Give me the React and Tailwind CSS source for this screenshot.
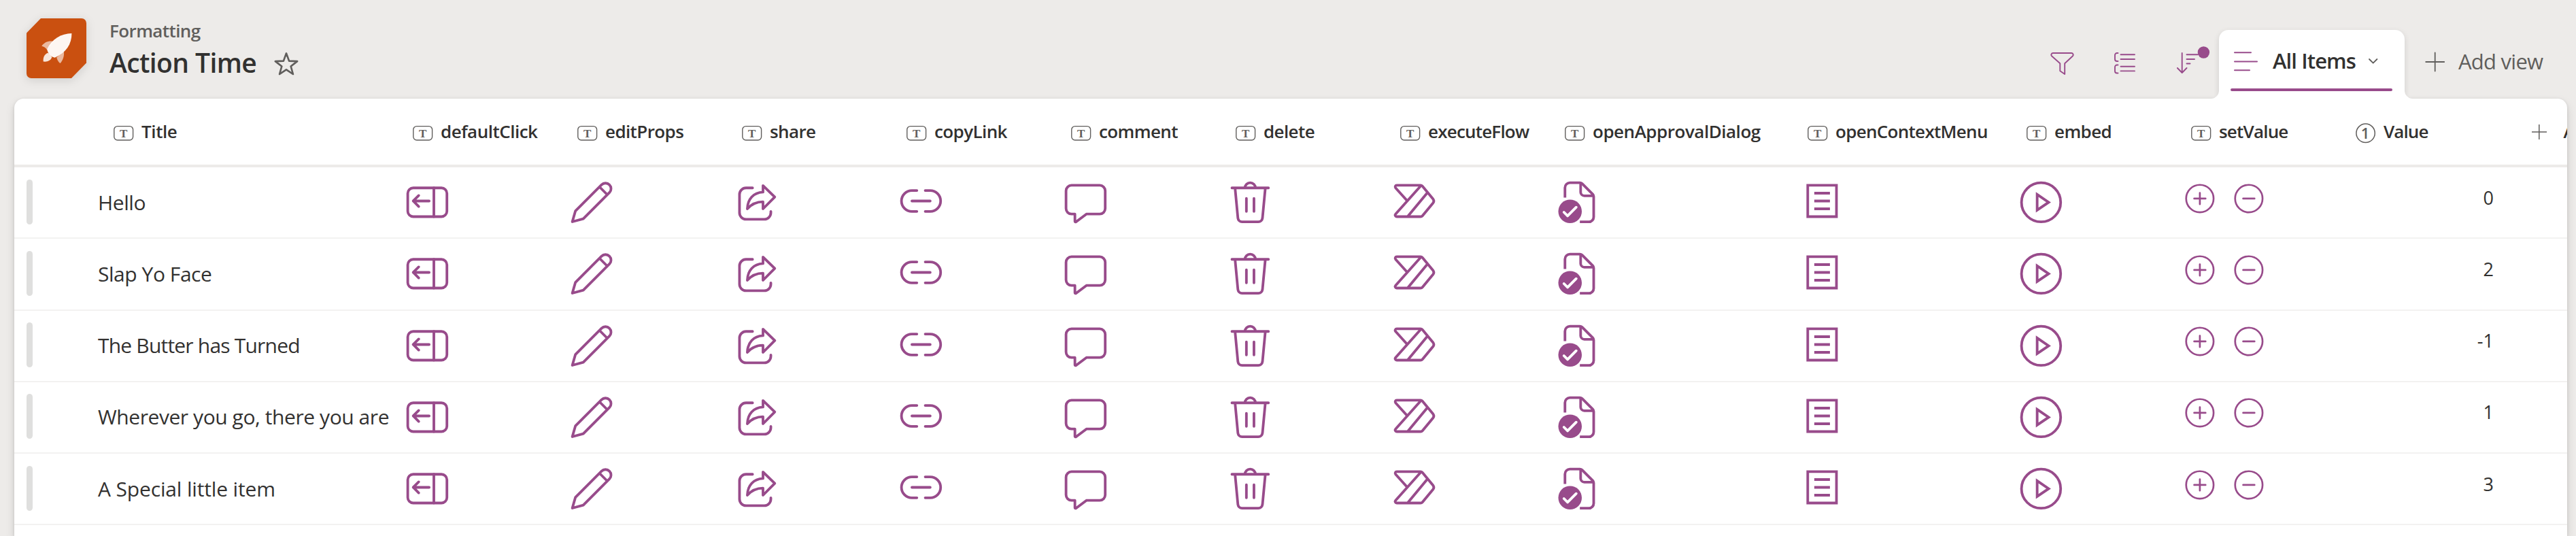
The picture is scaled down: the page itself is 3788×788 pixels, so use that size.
const ICON_PROPS = { fill: "none", stroke: "currentColor", strokeWidth: 1, strokeLinecap: "round", strokeLinejoin: "round" };

function CellIcon({ children, ...rest }) {
  return (
    <svg viewBox="0 0 20 20" className="size-[76.8px] shrink-0" {...ICON_PROPS} {...rest}>
      {children}
    </svg>
  );
}

function PanelIcon() {
  return (
    <CellIcon>
      <rect x="2.5" y="4.5" width="15" height="11" rx="2.1" />
      <path d="M12.5 4.5v11M10.7 9.5H4.6M6.7 7.4L4.6 9.5l2.1 2.1" />
    </CellIcon>
  );
}

function PencilIcon() {
  return (
    <CellIcon>
      <path d="M13.7 3.3a2.12 2.12 0 0 1 3 3L6.7 16.3 2.5 17.45 3.7 13.3zM12.9 4.1l3 3" />
    </CellIcon>
  );
}

function ShareIcon() {
  return (
    <CellIcon>
      <path d="M8.5 4.5H6a2.5 2.5 0 0 0-2.5 2.5v7A2.5 2.5 0 0 0 6 16.5h7a2.5 2.5 0 0 0 2.5-2.5v-.5" />
      <path d="M12.5 3.6L17 8l-4.5 4.5V9.8c-2.4 0-4.4.9-6 2.7.1-3.8 2.4-6.2 6-6.4z" />
    </CellIcon>
  );
}

function LinkIcon() {
  return (
    <CellIcon>
      <path d="M8.4 5.5H6.5a4 4 0 0 0 0 8h1.9M11.6 5.5h1.9a4 4 0 0 1 0 8h-1.9M6.5 9.5h7" />
    </CellIcon>
  );
}

function CommentIcon() {
  return (
    <CellIcon>
      <path d="M4.6 3.5h10.8a2.1 2.1 0 0 1 2.1 2.1v6.8a2.1 2.1 0 0 1-2.1 2.1h-5.1l-4 3a.25.25 0 0 1-.4-.2v-2.8H4.6a2.1 2.1 0 0 1-2.1-2.1V5.6a2.1 2.1 0 0 1 2.1-2.1z" />
    </CellIcon>
  );
}

function TrashIcon() {
  return (
    <CellIcon>
      <path d="M3 4.5h14M8 4.5a2 2 0 0 1 4 0M4.2 4.5l1.1 11.6a1.6 1.6 0 0 0 1.6 1.4h6.2a1.6 1.6 0 0 0 1.6-1.4l1.1-11.6M8.55 8.5v5M11.45 8.5v5" />
    </CellIcon>
  );
}

function FlowIcon() {
  return (
    <CellIcon>
      <path d="M3.1 3.5h9.1q.45 0 .75.35l4.1 4.95q.5.7 0 1.4l-4.1 4.95q-.3.35-.75.35H3.1a.6.6 0 0 1-.45-1L12.3 3.7M7 9.3L2.65 4.5a.6.6 0 0 1 .45-1M14.8 6.4L7.4 15.3" />
    </CellIcon>
  );
}

function ApprovalIcon() {
  return (
    <CellIcon strokeLinecap="butt">
      <path d="M4.5 8.2V4.4a1.9 1.9 0 0 1 1.9-1.9h3.8q.5 0 .85.35l4.1 4.1q.35.35.35.85v7.8a1.9 1.9 0 0 1-1.9 1.9h-3.4" />
      <path d="M10.5 2.6v3.5a1.4 1.4 0 0 0 1.4 1.4h3.5" />
      <circle cx="6.45" cy="13.5" r="4.5" fill="currentColor" stroke="none" />
      <path d="M4.1 13.8l1.4 1.4 3.3-3.3" stroke="#fff" strokeLinecap="round" />
    </CellIcon>
  );
}

function ListIcon() {
  return (
    <CellIcon strokeLinecap="butt" strokeLinejoin="miter">
      <path d="M4.5 3.5h11v12h-11zM7 6.5h6M7 9.5h6M7 12.5h6" />
    </CellIcon>
  );
}

function PlayIcon() {
  return (
    <CellIcon strokeLinejoin="miter">
      <circle cx="10" cy="10" r="7.5" />
      <path d="M8.5 7l4.4 3-4.4 3z" />
    </CellIcon>
  );
}

function StepIcons() {
  return (
    <div className="flex gap-[19px] pb-[12px] pl-[2.5px]">
      <svg viewBox="0 0 20 20" className="size-[53.8px]" {...ICON_PROPS}>
        <circle cx="10" cy="10" r="7.5" />
        <path d="M10 6.9v6.2M6.9 10h6.2" />
      </svg>
      <svg viewBox="0 0 20 20" className="size-[53.8px]" {...ICON_PROPS}>
        <circle cx="10" cy="10" r="7.5" />
        <path d="M6.9 10h6.2" />
      </svg>
    </div>
  );
}

function TextTypeIcon() {
  return (
    <svg width="30" height="30" viewBox="0 0 30 30" className="relative top-[2px] shrink-0 text-[#605e5c]">
      <rect x="0.8" y="4.6" width="27.8" height="20.4" rx="5" fill="none" stroke="currentColor" strokeWidth="1.4" />
      <text x="14.6" y="20.5" textAnchor="middle" fontFamily="Liberation Serif, serif" fontSize="17" fill="currentColor">T</text>
    </svg>
  );
}

function NumberTypeIcon() {
  return (
    <svg width="30" height="30" viewBox="0 0 30 30" className="relative top-[2px] shrink-0 text-[#605e5c]">
      <circle cx="14.6" cy="14.8" r="13.7" fill="none" stroke="currentColor" strokeWidth="1.5" />
      <text x="14" y="22.8" textAnchor="middle" fontFamily="Open Sans, sans-serif" fontSize="22" fill="currentColor">1</text>
    </svg>
  );
}

const COLUMNS = [
  ["defaultClick", "tracking-[-0.5px]"],
  ["editProps", "tracking-[-0.6px]"],
  ["share", "tracking-[-0.6px]"],
  ["copyLink", "tracking-[-0.6px]"],
  ["comment", "tracking-[-0.6px]"],
  ["delete", "tracking-[-0.6px]"],
  ["executeFlow", "tracking-[-0.8px]"],
  ["openApprovalDialog", "tracking-[-0.48px]"],
  ["openContextMenu", "tracking-[-0.7px]"],
  ["embed", "tracking-[-0.6px]"],
  ["setValue", "tracking-[-0.8px]"],
];

const ROWS = [
  { title: "Hello", tracking: "tracking-[-0.4px]", value: "0" },
  { title: "Slap Yo Face", tracking: "tracking-[-0.45px]", value: "2" },
  { title: "The Butter has Turned", tracking: "tracking-[-0.8px]", value: "-1" },
  { title: "Wherever you go, there you are", tracking: "tracking-[-0.43px]", value: "1" },
  { title: "A Special little item", tracking: "tracking-[-0.15px]", value: "3" },
];

const GRID = "grid grid-cols-[569px_repeat(7,242px)_357px_322px_242px_242px_242px_86px] items-center overflow-hidden";

function SiteLogo() {
  return (
    <svg width="88" height="88" viewBox="0 0 88 88" className="mt-[27px] shrink-0 drop-shadow-[0_3px_7px_rgba(0,0,0,0.12)]">
      <path d="M21 0H81a7 7 0 0 1 7 7V65.500L66 88H7a7 7 0 0 1-7-7V21.500z" fill="#ca5010" />
      <path d="M40 33.700C32 32.500 26 35 22.300 40.700c3.200 1 5.700 2.300 7.700 5z" fill="#fff" fillOpacity="0.6" />
      <path d="M55 48.500c.6 7-1.300 12.800-5.400 17.600-2-1.300-3.600-3.300-5.400-8.600z" fill="#fff" fillOpacity="0.6" />
      <path d="M31.500 50.800c-5.300 2-7.300 6.600-6.800 12.700 5.500.7 10.600-1 12.600-6.200-1.600-3.300-3.400-5.400-5.800-6.500z" fill="#fff" fillOpacity="0.85" />
      <path d="M66.400 22C51 22.300 37 30.500 30.200 45.200c1 6 5 11.300 11.300 12.500C58.500 50.500 66.600 37.500 66.400 22z" fill="#fff" fillOpacity="0.95" />
    </svg>
  );
}

function PageHeader() {
  return (
    <header className="flex h-[145px] items-start pl-[39px]">
      <SiteLogo />
      <div className="ml-[34px] pt-[25px]">
        <div className="h-10 text-[26px] leading-10 font-semibold tracking-[-0.6px] text-[#605e5c]">Formatting</div>
        <div className="flex h-[54px]">
          <h1 className="w-[242px] text-[39px] leading-[54px] font-semibold tracking-[-0.6px] whitespace-nowrap">Action Time</h1>
          <svg width="36" height="36" viewBox="0 0 36 36" className="mt-3" fill="none" stroke="#605e5c" strokeWidth="2.7" strokeLinejoin="round">
            <path d="M18 1.400l4.100 11.200 12 .5-9.400 7.400 3.200 11.500-9.900-6.700-9.900 6.700 3.200-11.500-9.400-7.400 12-.5z" />
          </svg>
        </div>
      </div>

      <div className="ml-auto flex h-full items-start text-[#984b8b]">
        <svg width="36" height="34" viewBox="0 0 36 34" className="mt-[77px] mr-[58px]" fill="none" stroke="currentColor" strokeWidth="1.9" strokeLinejoin="round">
          <path d="M4 1h27a2.600 2.600 0 0 1 1.800 4.500L21.200 16.300V32L14.300 27.200V16.300L2.200 5.500A2.600 2.600 0 0 1 4 1z" />
        </svg>
        <svg width="32" height="32" viewBox="0 0 32 32" className="mt-[77px] mr-[60px]" fill="none" stroke="currentColor" strokeWidth="1.9" strokeLinecap="round">
          <path d="M5.500 1H4a3 3 0 0 0-3 3v6a3 3 0 0 0 3 3h1.500M5.500 18.500H4a3 3 0 0 0-3 3v6a3 3 0 0 0 3 3h1.500M9.500 3.300H30M9.500 10H30M9.500 20.800H30M9.500 27.400H30" />
        </svg>
        <svg width="49" height="42" viewBox="0 -9 49 42" className="mt-[68px] mr-[12.500px]" fill="none" stroke="currentColor" strokeWidth="1.9" strokeLinecap="round">
          <path d="M7.700 1v29M.9 23l6.800 7 6.800-7" strokeLinejoin="round" />
          <path d="M14.500 3.300H31M14.500 10H26M14.500 16.500h5" />
          <circle cx="39.400" cy="0" r="8.700" fill="currentColor" stroke="none" />
        </svg>

        <div className="relative z-10 mt-11 flex h-[101px] w-[273.500px] items-start rounded-t-[14px] bg-white pl-[22px] shadow-[0_3px_10px_rgba(0,0,0,0.12)] [clip-path:inset(-20px_-20px_0_-20px)]">
          <svg width="12" height="12" viewBox="0 0 12 12" className="absolute bottom-0 -left-3" fill="#fff">
            <path d="M12 0v12H0A12 12 0 0 0 12 0z" />
          </svg>
          <svg width="12" height="12" viewBox="0 0 12 12" className="absolute -right-3 bottom-0" fill="#fff">
            <path d="M0 0v12h12A12 12 0 0 1 0 0z" />
          </svg>
          <svg width="36" height="30" viewBox="0 0 36 30" className="mt-8" stroke="currentColor" strokeWidth="2" strokeLinecap="round">
            <path d="M1 1.200H25M1 14.400H34M1 27.300H23" />
          </svg>
          <span className="ml-[21.500px] w-[139px] pt-[25px] text-[31px] leading-[41px] font-semibold tracking-[-0.9px] whitespace-nowrap text-[#323130]">All Items</span>
          <svg width="16" height="10" viewBox="0 0 16 10" className="mt-[41px] ml-[0.500px]" fill="none" stroke="#605e5c" strokeWidth="1.8" strokeLinecap="round" strokeLinejoin="round">
            <path d="M2 2l5.700 5.700L13.400 2" />
          </svg>
          <div className="absolute bottom-[11px] left-[17.500px] h-1 w-[238px] rounded-full bg-[#984b8b]" />
        </div>

        <div className="flex w-[252px] items-start pl-[30px] text-[#605e5c]">
          <svg width="30" height="30" viewBox="0 0 30 30" className="mt-[76px]" stroke="currentColor" strokeWidth="1.800" strokeLinecap="round">
            <path d="M14.700 1.500v27M1.200 15h27" />
          </svg>
          <span className="ml-[19px] pt-[70px] text-[31px] leading-[41px] tracking-[-0.75px] whitespace-nowrap">Add view</span>
        </div>
      </div>
    </header>
  );
}

function HeaderRow() {
  return (
    <div className={`${GRID} h-[101px] rounded-t-[14px] border-b-4 border-[#edebe9] text-[26px] leading-[41px] font-semibold whitespace-nowrap`}>
      <div className="flex items-center gap-[11px] pl-[146px]">
        <TextTypeIcon />
        <span className="tracking-[-0.4px]">Title</span>
      </div>
      {COLUMNS.map(([name, tracking]) => (
        <div key={name} className="flex items-center gap-[11px] pl-[17px]">
          <TextTypeIcon />
          <span className={tracking}>{name}</span>
        </div>
      ))}
      <div className="flex items-center gap-[11px] pl-[17px]">
        <NumberTypeIcon />
        <span className="tracking-[-0.9px]">Value</span>
      </div>
      <div className="flex items-center gap-[25px] pl-[33.500px]">
        <svg width="22" height="22" viewBox="0 0 22 22" className="shrink-0" stroke="#605e5c" strokeWidth="1.500">
          <path d="M10.800 0v22M0 11h22" />
        </svg>
        <span>Add column</span>
      </div>
    </div>
  );
}

function ItemRow({ row }) {
  return (
    <div className={`${GRID} h-[105.25px] border-b-2 border-[#f3f2f1] text-[#984b8b]`}>
      <div className="flex items-center pl-[18px] whitespace-nowrap">
        <span className="relative -top-px h-[66px] w-[9px] rounded-full bg-[#dfdfde]" />
        <span className={`ml-24 text-[30px] leading-10 text-[#323130] ${row.tracking}`}>{row.title}</span>
      </div>
      <PanelIcon />
      <PencilIcon />
      <ShareIcon />
      <LinkIcon />
      <CommentIcon />
      <TrashIcon />
      <FlowIcon />
      <ApprovalIcon />
      <ListIcon />
      <PlayIcon />
      <StepIcons />
      <div className="pr-[22px] pb-[14px] text-right text-[27px] leading-10 text-[#323130]">{row.value}</div>
    </div>
  );
}

export default function App() {
  return (
    <div className="flex h-[788px] w-[3788px] flex-col overflow-hidden bg-[#edebe9] font-['Open_Sans','Noto_Sans',sans-serif] text-[#323130]">
      <PageHeader />
      <main className="ml-[21px] w-[3754px] flex-1 rounded-t-[14px] bg-white shadow-[0_6px_14px_rgba(0,0,0,0.13),0_1px_4px_rgba(0,0,0,0.11)]">
        <HeaderRow />
        {ROWS.map((row) => (
          <ItemRow key={row.title} row={row} />
        ))}
      </main>
    </div>
  );
}
